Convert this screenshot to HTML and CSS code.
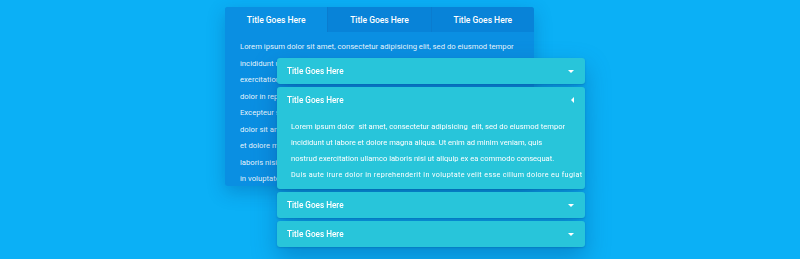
FILE: index.html
```html
<!DOCTYPE html>
<html lang="en">
<head>
    <meta charset="UTF-8">
    <meta name="viewport" content="width=device-width, initial-scale=1.0">
    <title>Tabs and Accordion</title>
    <link rel="stylesheet" href="styles.css">
</head>
<body>
    <div class="stage">
        <div class="tabs">
            <div class="tab-bar">
                <div class="tab active">Title Goes Here</div>
                <div class="tab">Title Goes Here</div>
                <div class="tab">Title Goes Here</div>
            </div>
            <div class="tab-body">
                <p>Lorem ipsum dolor sit amet, consectetur adipisicing elit, sed do eiusmod tempor</p>
                <p>incididunt ut labore et dolore magna aliqua. Ut enim ad minim veniam, quis nostrud</p>
                <p>exercitation ullamco laboris nisi ut aliquip ex ea commodo consequat. Duis aute irure</p>
                <p>dolor in reprehenderit in voluptate velit esse cillum dolore eu fugiat nulla pariatur.</p>
                <p>Excepteur sint occaecat cupidatat non proident, sunt in culpa qui officia. Lorem ipsum</p>
                <p>dolor sit amet, consectetur adipisicing elit, sed do eiusmod tempor incididunt ut labore</p>
                <p>et dolore magna aliqua. Ut enim ad minim veniam, quis nostrud exercitation ullamco</p>
                <p>laboris nisi ut aliquip ex ea commodo consequat. Duis aute irure dolor in reprehenderit</p>
                <p>in voluptate velit esse cillum dolore eu fugiat nulla pariatur.</p>
            </div>
        </div>

        <div class="accordion">
            <div class="acc-item">
                <div class="acc-head">Title Goes Here <span class="arrow down"></span></div>
            </div>
            <div class="acc-item open">
                <div class="acc-head">Title Goes Here <span class="arrow left"></span></div>
                <div class="acc-body">
                    <p>Lorem ipsum dolor&nbsp; sit amet, consectetur adipisicing&nbsp; elit, sed do eiusmod tempor</p>
                    <p>incididunt ut labore et dolore magna aliqua. Ut enim ad minim veniam, quis</p>
                    <p>nostrud exercitation ullamco laboris nisi ut aliquip ex ea commodo consequat.</p>
                    <p class="small">Duis aute irure dolor in reprehenderit in voluptate velit esse cillum dolore eu fugiat</p>
                </div>
            </div>
            <div class="acc-item">
                <div class="acc-head">Title Goes Here <span class="arrow down"></span></div>
            </div>
            <div class="acc-item">
                <div class="acc-head">Title Goes Here <span class="arrow down"></span></div>
            </div>
        </div>
    </div>
</body>
</html>
```

FILE: styles.css
```css
body {
    margin: 0;
    background: #0bb0f6;
    font-family: Roboto, "Liberation Sans", sans-serif;
    color: #fff;
    height: 259px;
    overflow: hidden;
}
.stage {
    position: relative;
    width: 800px;
    height: 259px;
}
.tabs {
    position: relative;
    top: 7px;
    margin-left: 225px;
    width: 309px;
    height: 179px;
    background: #0a8fe2;
    border-radius: 3px;
    overflow: hidden;
    box-shadow: 0 6px 18px rgba(0, 40, 110, 0.25);
}
.tab-bar {
    display: flex;
    height: 25px;
}
.tab {
    flex: 1;
    display: flex;
    align-items: center;
    justify-content: center;
    font-size: 8.5px;
    font-weight: 500;
    background: #0883d8;
}
.tab + .tab {
    border-left: 1px solid #0a7ccf;
}
.tab.active {
    background: #0a8fe2;
}
.tab-body {
    padding: 7px 15px 0;
    font-size: 7.7px;
    color: rgba(255, 255, 255, 0.92);
}
.tab-body p {
    margin: 0;
    line-height: 16.5px;
    white-space: nowrap;
}
.accordion {
    position: absolute;
    left: 277px;
    top: 58px;
    width: 308px;
    display: flex;
    flex-direction: column;
    gap: 3px;
    filter: drop-shadow(0 10px 12px rgba(0, 60, 130, 0.35));
}
.acc-item {
    background: #28c5da;
    border-radius: 3px;
    box-shadow: 0 1px 2px rgba(0, 70, 140, 0.3);
}
.acc-head {
    height: 26px;
    display: flex;
    align-items: center;
    justify-content: space-between;
    padding: 0 10px;
    font-size: 8.2px;
    font-weight: 500;
}
.arrow {
    width: 0;
    height: 0;
    margin-right: 1px;
}
.arrow.down {
    border-left: 3px solid transparent;
    border-right: 3px solid transparent;
    border-top: 3.5px solid #fff;
}
.arrow.left {
    border-top: 3px solid transparent;
    border-bottom: 3px solid transparent;
    border-right: 3px solid #fff;
}
.acc-body {
    padding: 6px 14px 6px;
    font-size: 7.6px;
}
.acc-body p {
    margin: 0;
    line-height: 16px;
    white-space: nowrap;
}
.acc-body p.small {
    font-size: 7.2px;
    letter-spacing: 0.37px;
}
```
